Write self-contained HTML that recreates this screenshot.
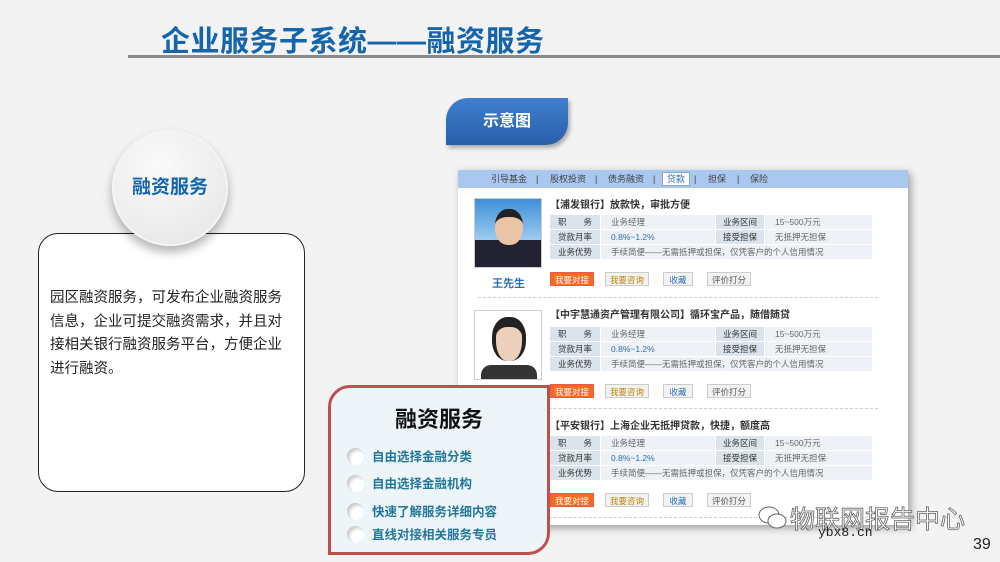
<!DOCTYPE html>
<html><head><meta charset="utf-8"><style>
*{margin:0;padding:0;box-sizing:border-box}
body{width:1000px;height:562px;overflow:hidden;background:#f3f3f3;font-family:"Liberation Sans","Noto Sans CJK SC",sans-serif;position:relative}
.a{position:absolute}
.title{left:161px;top:18px;font-size:29px;font-weight:bold;color:#1565ad;white-space:nowrap;letter-spacing:0.5px}
.line{left:128px;top:55px;width:872px;height:3px;background:#8a8a8a}
.tab{left:446px;top:98px;width:122px;height:47px;background:linear-gradient(#3f7fcf,#2a5fa8);border-radius:22px 0 22px 0;color:#fff;font-size:16px;font-weight:bold;text-align:center;line-height:47px;box-shadow:2px 3px 4px rgba(0,0,0,.3)}
.box{left:38px;top:233px;width:267px;height:259px;border:1px solid #222;border-radius:20px;background:#fff}
.circ{left:112px;top:130px;width:116px;height:116px;border-radius:50%;background:radial-gradient(circle at 40% 30%,#fafafa,#e4e4e4);box-shadow:0 6px 10px rgba(0,0,0,.3);border:2px solid #f4f4f4;color:#1565ad;font-size:19px;font-weight:bold;text-align:center;line-height:112px}
.desc{left:50px;top:287px;width:236px;font-size:14.5px;line-height:23.5px;color:#222}
.panel{left:458px;top:170px;width:450px;height:355px;background:#fff;box-shadow:3px 3px 8px rgba(0,0,0,.35)}
.nav{left:0;top:0;width:450px;height:18px;background:#a9c7ef;font-size:9px;color:#444;line-height:18px;white-space:nowrap}
.nav span{position:absolute}
.photo{width:68px;height:70px;border:1px solid #ccc}
.et{font-size:10px;font-weight:bold;color:#333;white-space:nowrap}
.tb{font-size:8.5px;color:#666;white-space:nowrap}
.c{position:absolute;height:14px;line-height:14px}
.l{background:#dbe3ec;color:#333;text-align:center}
.v{background:#eef1f5;padding-left:10px}
.btn{position:absolute;height:14px;line-height:14px;font-size:8.5px;text-align:center;border:1px solid #ccc;background:#f2f2f2;color:#555}
.dash{position:absolute;left:20px;width:400px;border-top:1px dashed #ccc}
.red{left:328px;top:385px;width:222px;height:170px;border:3px solid #c0504d;border-radius:22px 0 22px 0;background:#eef5f9}
.red h2{position:absolute;left:0;width:216px;top:14px;text-align:center;font-size:22px;color:#111}
.it{position:absolute;left:16px;font-size:12.5px;font-weight:bold;color:#22789a;white-space:nowrap}
.it i{display:inline-block;width:17px;height:17px;border-radius:50%;background:radial-gradient(circle at 65% 65%,#fff 40%,#999);vertical-align:middle;margin-right:8px;margin-top:-3px}
</style></head><body>
<div class="a title">企业服务子系统——融资服务</div>
<div class="a line"></div>
<div class="a tab">示意图</div>
<div class="a box"></div>
<div class="a circ">融资服务</div>
<div class="a desc">园区融资服务，可发布企业融资服务信息，企业可提交融资需求，并且对接相关银行融资服务平台，方便企业进行融资。</div>

<div class="a panel">
 <div class="a nav">
  <span style="left:33px">引导基金</span><span style="left:78px">|</span>
  <span style="left:92px">股权投资</span><span style="left:137px">|</span>
  <span style="left:150px">债务融资</span><span style="left:195px">|</span>
  <span style="left:204px;top:2px;height:14px;line-height:13px;padding:0 4px;background:#fff;border:1px solid #8ab;color:#2a6fb5">贷款</span><span style="left:236px">|</span>
  <span style="left:250px">担保</span><span style="left:279px">|</span>
  <span style="left:292px">保险</span>
 </div>

 <div class="a photo" style="left:16px;top:28px;background:linear-gradient(#3d8fd8,#9dcbf0 60%,#223 60%)"><div style="position:absolute;left:20px;top:10px;width:28px;height:36px;border-radius:45%;background:#e9c4a6;border-top:8px solid #222"></div></div>
 <div class="a" style="left:34px;top:105px;font-size:11px;font-weight:bold;color:#2a6fb5">王先生</div>
 <div class="a et" style="left:92px;top:26px">【浦发银行】放款快，审批方便</div>
 <div class="a tb" style="left:92px;top:45px;width:322px;height:46px">
  <div class="c l" style="left:0;top:0;width:50px">职　　务</div><div class="c v" style="left:51px;top:0;width:114px">业务经理</div><div class="c l" style="left:166px;top:0;width:48px">业务区间</div><div class="c v" style="left:215px;top:0;width:107px">15~500万元</div>
  <div class="c l" style="left:0;top:15px;width:50px">贷款月率</div><div class="c v" style="left:51px;top:15px;width:114px;color:#2a6fb5">0.8%~1.2%</div><div class="c l" style="left:166px;top:15px;width:48px">接受担保</div><div class="c v" style="left:215px;top:15px;width:107px">无抵押无担保</div>
  <div class="c l" style="left:0;top:30px;width:50px">业务优势</div><div class="c v" style="left:51px;top:30px;width:271px">手续简便——无需抵押或担保，仅凭客户的个人信用情况</div>
 </div>
 <div class="btn" style="left:92px;top:102px;width:44px;background:#f56b1c;color:#fff;border-color:#e55">我要对接</div>
 <div class="btn" style="left:147px;top:102px;width:44px;color:#b8860b">我要咨询</div>
 <div class="btn" style="left:205px;top:102px;width:30px;color:#2a6fb5">收藏</div>
 <div class="btn" style="left:249px;top:102px;width:44px">评价打分</div>
 <div class="dash" style="top:127px"></div>

 <div class="a photo" style="left:16px;top:140px;background:#fff"><div style="position:absolute;left:17px;top:6px;width:34px;height:44px;border-radius:45%;background:#ecd0bc;border-top:10px solid #222;border-left:4px solid #222;border-right:4px solid #222"></div><div style="position:absolute;left:6px;top:54px;width:56px;height:14px;background:#333;border-radius:10px 10px 0 0"></div></div>
 <div class="a et" style="left:92px;top:136px">【中宇慧通资产管理有限公司】循环宝产品，随借随贷</div>
 <div class="a tb" style="left:92px;top:157px;width:322px;height:46px">
  <div class="c l" style="left:0;top:0;width:50px">职　　务</div><div class="c v" style="left:51px;top:0;width:114px">业务经理</div><div class="c l" style="left:166px;top:0;width:48px">业务区间</div><div class="c v" style="left:215px;top:0;width:107px">15~500万元</div>
  <div class="c l" style="left:0;top:15px;width:50px">贷款月率</div><div class="c v" style="left:51px;top:15px;width:114px;color:#2a6fb5">0.8%~1.2%</div><div class="c l" style="left:166px;top:15px;width:48px">接受担保</div><div class="c v" style="left:215px;top:15px;width:107px">无抵押无担保</div>
  <div class="c l" style="left:0;top:30px;width:50px">业务优势</div><div class="c v" style="left:51px;top:30px;width:271px">手续简便——无需抵押或担保，仅凭客户的个人信用情况</div>
 </div>
 <div class="btn" style="left:92px;top:214px;width:44px;background:#f56b1c;color:#fff;border-color:#e55">我要对接</div>
 <div class="btn" style="left:147px;top:214px;width:44px;color:#b8860b">我要咨询</div>
 <div class="btn" style="left:205px;top:214px;width:30px;color:#2a6fb5">收藏</div>
 <div class="btn" style="left:249px;top:214px;width:44px">评价打分</div>
 <div class="dash" style="top:238px"></div>

 <div class="a et" style="left:92px;top:247px">【平安银行】上海企业无抵押贷款，快捷，额度高</div>
 <div class="a tb" style="left:92px;top:266px;width:322px;height:46px">
  <div class="c l" style="left:0;top:0;width:50px">职　　务</div><div class="c v" style="left:51px;top:0;width:114px">业务经理</div><div class="c l" style="left:166px;top:0;width:48px">业务区间</div><div class="c v" style="left:215px;top:0;width:107px">15~500万元</div>
  <div class="c l" style="left:0;top:15px;width:50px">贷款月率</div><div class="c v" style="left:51px;top:15px;width:114px;color:#2a6fb5">0.8%~1.2%</div><div class="c l" style="left:166px;top:15px;width:48px">接受担保</div><div class="c v" style="left:215px;top:15px;width:107px">无抵押无担保</div>
  <div class="c l" style="left:0;top:30px;width:50px">业务优势</div><div class="c v" style="left:51px;top:30px;width:271px">手续简便——无需抵押或担保，仅凭客户的个人信用情况</div>
 </div>
 <div class="btn" style="left:92px;top:323px;width:44px;background:#f56b1c;color:#fff;border-color:#e55">我要对接</div>
 <div class="btn" style="left:147px;top:323px;width:44px;color:#b8860b">我要咨询</div>
 <div class="btn" style="left:205px;top:323px;width:30px;color:#2a6fb5">收藏</div>
 <div class="btn" style="left:249px;top:323px;width:44px">评价打分</div>
 <div class="dash" style="top:347px"></div>
</div>

<div class="a red">
 <h2>融资服务</h2>
 <div class="it" style="top:58px"><i></i>自由选择金融分类</div>
 <div class="it" style="top:85px"><i></i>自由选择金融机构</div>
 <div class="it" style="top:113px"><i></i>快速了解服务详细内容</div>
 <div class="it" style="top:136px"><i></i>直线对接相关服务专员</div>
</div>

<svg class="a" style="left:758px;top:505px" width="30" height="26" viewBox="0 0 30 26"><g fill="#fff" stroke="#666" stroke-width="1"><ellipse cx="11" cy="10" rx="10" ry="8"/><ellipse cx="19" cy="16" rx="9" ry="7"/></g></svg>
<div class="a" style="left:790px;top:500px;font-size:25px;color:#fff;-webkit-text-stroke:0.8px #666;white-space:nowrap">物联网报告中心</div>
<div class="a" style="left:818px;top:525px;font-size:13px;color:#222;font-family:'Liberation Mono',monospace">ybx8.cn</div>
<div class="a" style="left:973px;top:536px;font-size:16px;color:#222">39</div>
</body></html>
